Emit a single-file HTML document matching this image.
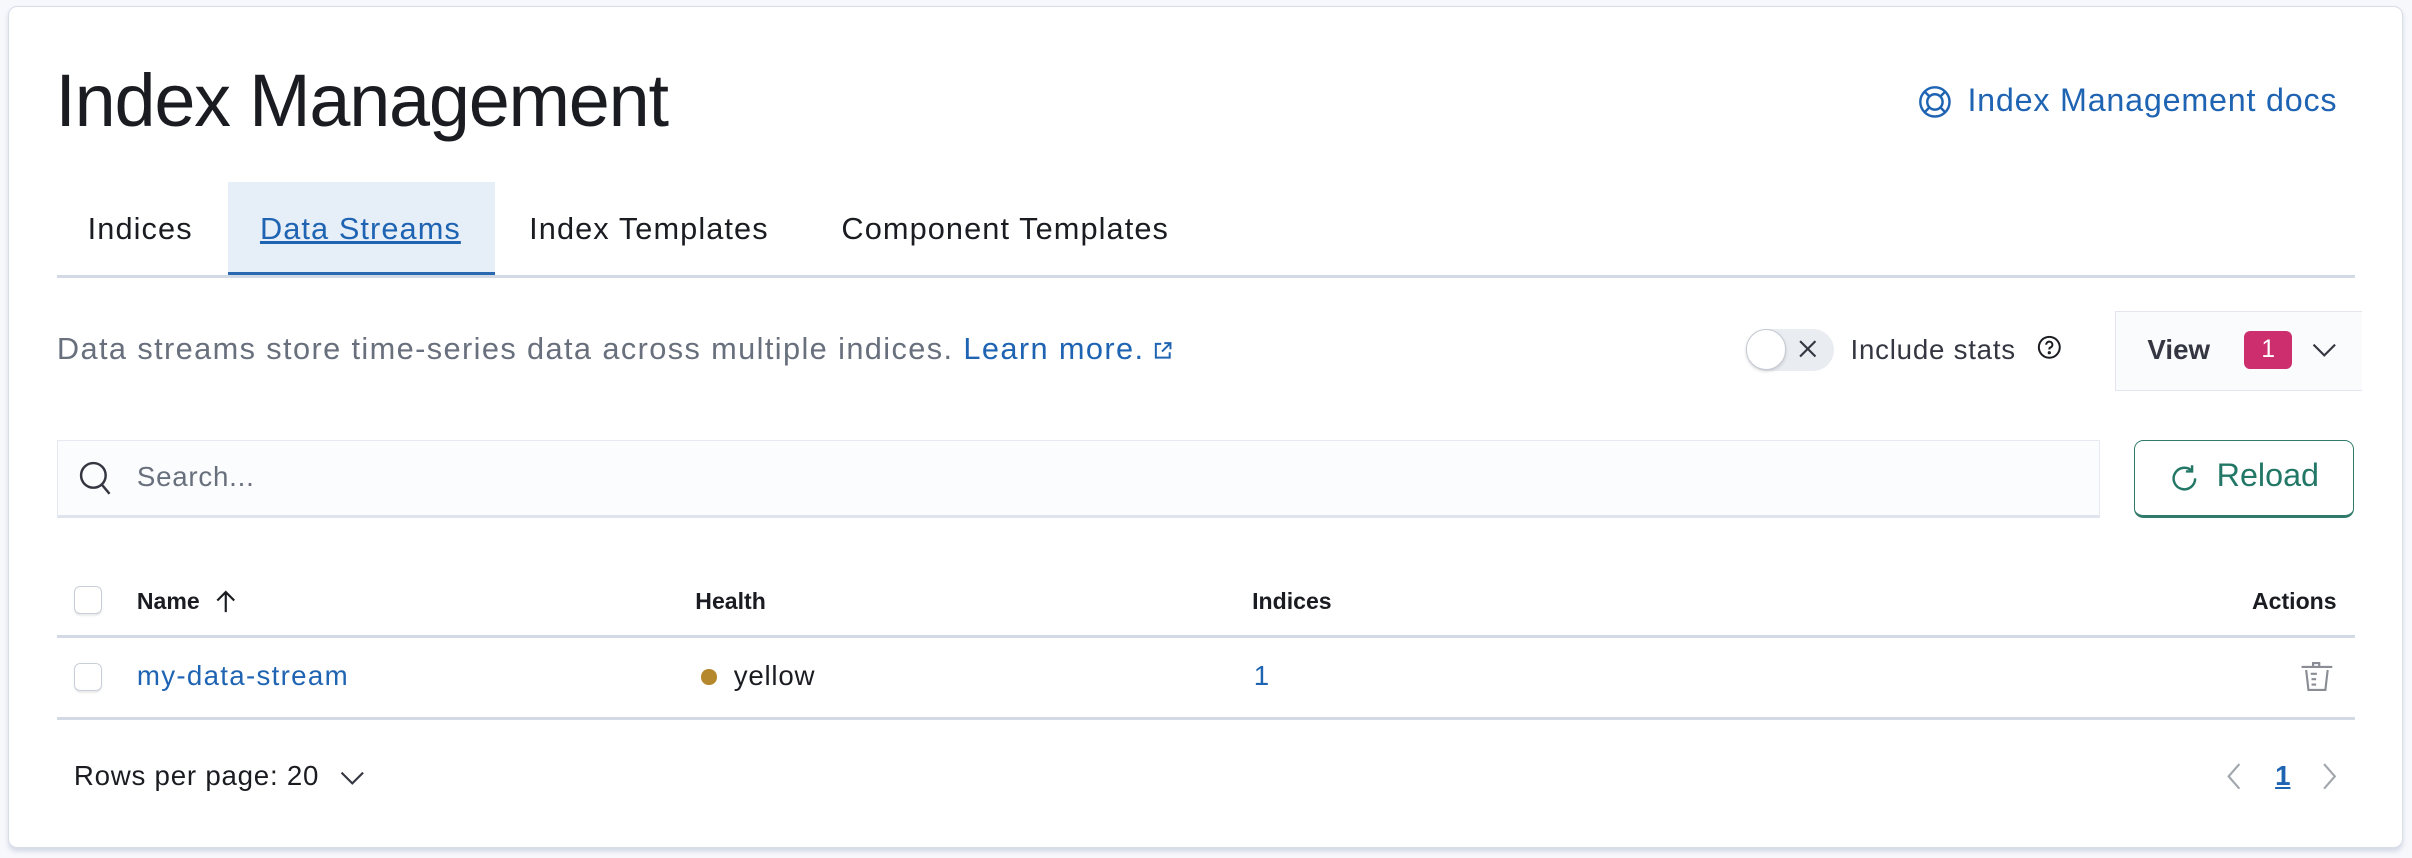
<!DOCTYPE html>
<html><head><meta charset="utf-8"><style>
html,body{margin:0;padding:0;background:#f7f8fc;width:2412px;height:858px;overflow:hidden}
#w{zoom:1.53827;width:1568px;height:558px;position:relative;font-family:"Liberation Sans",sans-serif;color:#1a1c21}
.a{position:absolute;white-space:nowrap}
.panel{position:absolute;left:5px;top:4px;width:1556px;height:546px;background:#fff;border:1px solid #d8dde8;border-radius:6px;box-shadow:0 2px 3px rgba(150,160,190,.35)}
.blue{color:#1f64b3}
.line{position:absolute;background:#d3dae6;height:2px}
.cb{position:absolute;width:17px;height:17px;border:1px solid #c9cfd9;border-radius:4px;background:#fff;box-shadow:0 1px 1px rgba(0,0,0,.08)}
.tab{font-size:20px;letter-spacing:0.7px;top:137px}
</style></head><body><div id="w">
<div class="panel"></div>
<div class="a" style="left:36px;top:38px;font-size:48px;font-weight:300;color:#1a1c21;letter-spacing:-0.8px">Index Management</div>
<svg class="a" style="left:1247px;top:55px" width="22" height="22" viewBox="0 0 22 22" fill="none" stroke="#1f64b3" stroke-width="1.6"><circle cx="11" cy="11" r="9.5"/><circle cx="11" cy="11" r="5"/><path d="M4.3 4.3l3.2 3.2M17.7 4.3l-3.2 3.2M4.3 17.7l3.2-3.2M17.7 17.7l-3.2-3.2"/></svg>
<div class="a blue" style="left:1279px;top:53px;font-size:21px;letter-spacing:0.5px">Index Management docs</div>
<div class="a" style="left:148px;top:118px;width:174px;height:59px;background:#e6eef7"></div>
<div class="a" style="left:148px;top:177px;width:174px;height:3px;background:#2b69b0"></div>
<div class="line" style="left:37px;top:179px;width:1494px"></div>
<div class="a tab" style="left:57px">Indices</div>
<div class="a blue tab" style="left:169px;text-decoration:underline">Data Streams</div>
<div class="a tab" style="left:344px">Index Templates</div>
<div class="a tab" style="left:547px">Component Templates</div>
<div class="a" style="left:37px;top:215px;font-size:20px;color:#69707d;letter-spacing:0.9px">Data streams store time-series data across multiple indices. <span class="blue">Learn more.</span></div>
<svg class="a" style="left:749px;top:221px" width="14" height="14" viewBox="0 0 14 14" fill="none" stroke="#1f64b3" stroke-width="1.3"><path d="M6 2.5H2.5v9h9V8M8 2h4v4M12 2L6.5 7.5"/></svg>
<div class="a" style="left:1135px;top:214px;width:57px;height:27px;border-radius:14px;background:#e9ecf1"></div>
<div class="a" style="left:1135px;top:214px;width:25px;height:25px;border-radius:50%;background:#fff;border:1px solid #c5cad3;box-shadow:0 1px 2px rgba(0,0,0,.15)"></div>
<svg class="a" style="left:1168px;top:220px" width="14" height="14" viewBox="0 0 14 14" stroke="#343741" stroke-width="1.4"><path d="M2 2l10 10M12 2L2 12"/></svg>
<div class="a" style="left:1203px;top:217px;font-size:18px;color:#343741;letter-spacing:0.5px">Include stats</div>
<svg class="a" style="left:1324px;top:218px" width="16" height="16" viewBox="0 0 16 16" fill="none" stroke="#1a1c21" stroke-width="1.3"><circle cx="8" cy="8" r="6.8"/><path d="M6 6.3a2 2 0 1 1 2.6 1.9c-.5.2-.6.6-.6 1.2"/><circle cx="8" cy="11.5" r=".4" fill="#1a1c21"/></svg>
<div class="a" style="left:1375px;top:202px;width:160px;height:51px;background:#fafbfd;border:1px solid #e3e6ef;border-right:none"></div>
<div class="a" style="left:1396px;top:217px;font-size:18px;font-weight:bold;color:#343741">View</div>
<div class="a" style="left:1459px;top:215px;width:31px;height:25px;border-radius:4px;background:#cc2e6e;color:#fff;font-size:16px;text-align:center;line-height:25px">1</div>
<svg class="a" style="left:1503px;top:221px" width="16" height="12" viewBox="0 0 16 12" fill="none" stroke="#343741" stroke-width="1.4"><path d="M1 3l7 7 7-7"/></svg>
<div class="a" style="left:37px;top:286px;width:1327px;height:48px;background:#fbfcfd;border:1px solid #e6e9f1;border-bottom:2px solid #dfe3ec"></div>
<svg class="a" style="left:51px;top:299px" width="24" height="24" viewBox="0 0 24 24" fill="none" stroke="#343741" stroke-width="1.6"><circle cx="10" cy="10" r="8"/><path d="M15.5 16l5 6"/></svg>
<div class="a" style="left:89px;top:300px;font-size:18px;color:#69707d;letter-spacing:0.5px">Search...</div>
<div class="a" style="left:1387px;top:286px;width:142px;height:48px;border:1px solid #2f7a6a;border-bottom-width:2px;border-radius:6px;background:#fff"></div>
<svg class="a" style="left:1410px;top:301px" width="20" height="20" viewBox="0 0 20 20" fill="none" stroke="#237766" stroke-width="1.6"><path d="M15 5.2A7 7 0 1 0 17 10"/><path d="M15 1.5v4h-4"/></svg>
<div class="a" style="left:1441px;top:297px;font-size:21px;color:#237766">Reload</div>
<div class="cb" style="left:48px;top:381px"></div>
<div class="a" style="left:89px;top:382px;font-size:15px;font-weight:bold">Name</div>
<svg class="a" style="left:140px;top:383px" width="14" height="16" viewBox="0 0 14 16" fill="none" stroke="#1a1c21" stroke-width="1.4"><path d="M7 15V2M1.5 7.5L7 2l5.5 5.5"/></svg>
<div class="a" style="left:452px;top:382px;font-size:15px;font-weight:bold">Health</div>
<div class="a" style="left:814px;top:382px;font-size:15px;font-weight:bold">Indices</div>
<div class="a" style="left:1464px;top:382px;font-size:15px;font-weight:bold">Actions</div>
<div class="line" style="left:37px;top:413px;width:1494px"></div>
<div class="cb" style="left:48px;top:431px"></div>
<div class="a blue" style="left:89px;top:429px;font-size:18px;letter-spacing:0.85px">my-data-stream</div>
<div class="a" style="left:456px;top:435px;width:10px;height:10px;border-radius:50%;background:#b5882d"></div>
<div class="a" style="left:477px;top:429px;font-size:18px;color:#1a1c21;letter-spacing:0.5px">yellow</div>
<div class="a blue" style="left:815px;top:429px;font-size:18px">1</div>
<svg class="a" style="left:1495px;top:429px" width="22" height="22" viewBox="0 0 22 22" fill="none" stroke="#8a8d93" stroke-width="1.4"><path d="M1 4.5h20M8.5 4.5V2h4v2.5M4 6.5l1.5 13h11l1.5-13M7 9h4M7.5 12.5h3M7.5 16h3"/></svg>
<div class="line" style="left:37px;top:466px;width:1494px"></div>
<div class="a" style="left:48px;top:494px;font-size:18px;color:#1a1c21;letter-spacing:0.5px">Rows per page: 20</div>
<svg class="a" style="left:221px;top:499px" width="16" height="12" viewBox="0 0 16 12" fill="none" stroke="#343741" stroke-width="1.4"><path d="M1 3l7 7 7-7"/></svg>
<svg class="a" style="left:1446px;top:495px" width="12" height="20" viewBox="0 0 12 20" fill="none" stroke="#a2a6ad" stroke-width="1.4"><path d="M10 2L3 10l7 8"/></svg>
<div class="a blue" style="left:1479px;top:494px;font-size:18px;font-weight:bold;text-decoration:underline">1</div>
<svg class="a" style="left:1509px;top:495px" width="12" height="20" viewBox="0 0 12 20" fill="none" stroke="#a2a6ad" stroke-width="1.4"><path d="M2 2l7 8-7 8"/></svg>
</div></body></html>
